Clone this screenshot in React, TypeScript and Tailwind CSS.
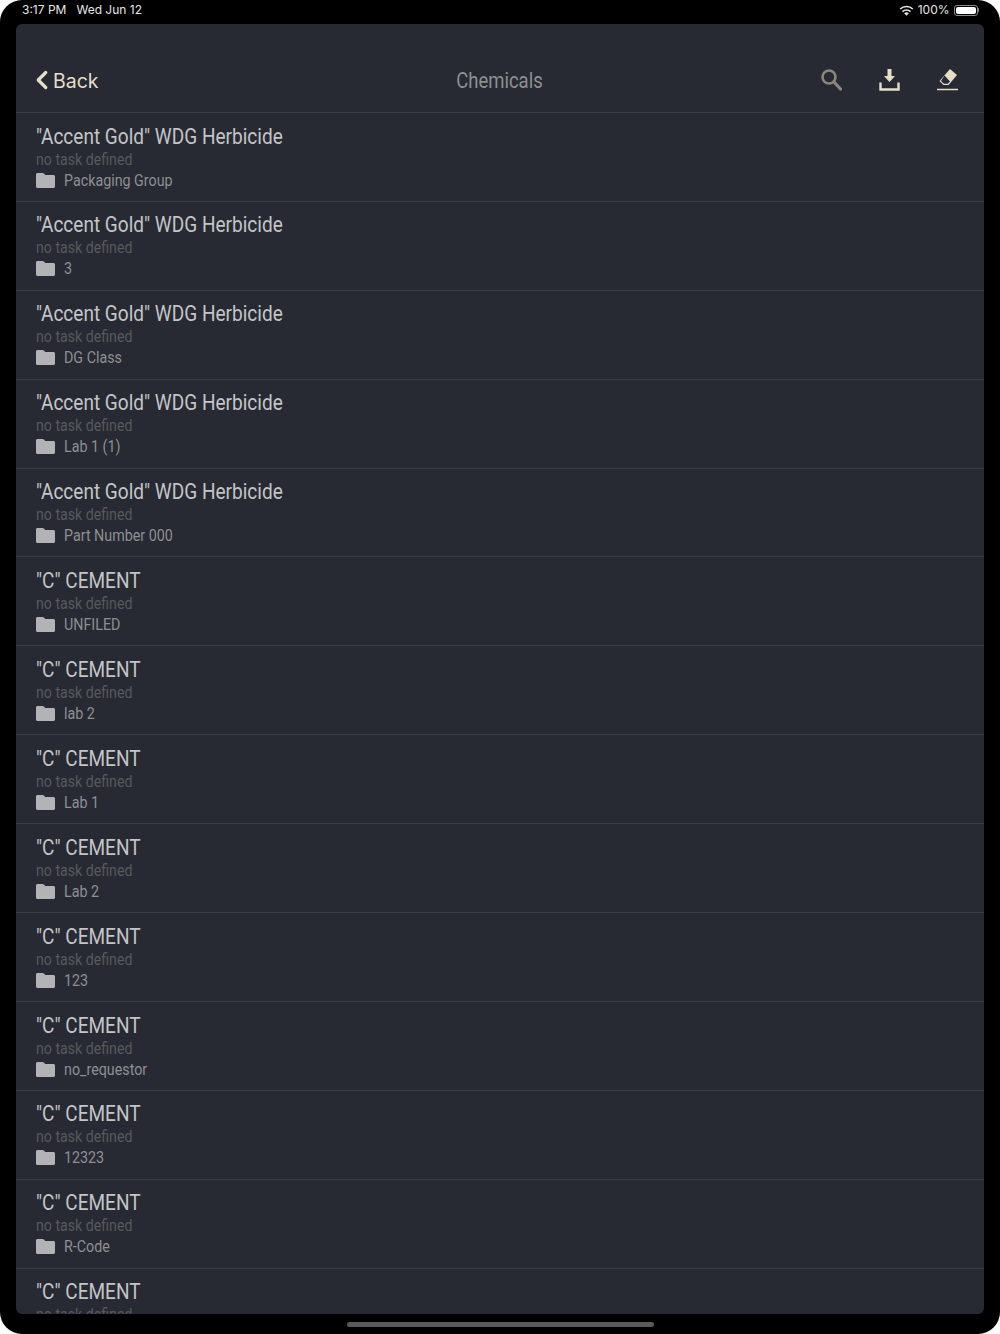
import { ChevronLeft } from 'lucide-react';

interface Chemical {
  name: string;
  folder: string;
}

const GOLD = '"Accent Gold" WDG Herbicide';
const CEMENT = '"C" CEMENT';

const chemicals: Chemical[] = [
  { name: GOLD, folder: 'Packaging Group' },
  { name: GOLD, folder: '3' },
  { name: GOLD, folder: 'DG Class' },
  { name: GOLD, folder: 'Lab 1 (1)' },
  { name: GOLD, folder: 'Part Number 000' },
  { name: CEMENT, folder: 'UNFILED' },
  { name: CEMENT, folder: 'lab 2' },
  { name: CEMENT, folder: 'Lab 1' },
  { name: CEMENT, folder: 'Lab 2' },
  { name: CEMENT, folder: '123' },
  { name: CEMENT, folder: 'no_requestor' },
  { name: CEMENT, folder: '12323' },
  { name: CEMENT, folder: 'R-Code' },
  { name: CEMENT, folder: '' },
];

function FolderIcon() {
  return (
    <svg width="19" height="16" viewBox="0 0 19 16" className="shrink-0">
      <path
        d="M1.500 1h5.200c.5 0 .9.2 1.200.5L9.300 3h8.200c.8 0 1.500.7 1.500 1.500v10c0 .8-.7 1.500-1.500 1.500h-16C.7 16 0 15.300 0 14.500v-12C0 1.700.7 1 1.500 1z"
        fill="#b3b3b5"
      />
    </svg>
  );
}

function Row({ item }: { item: Chemical }) {
  return (
    <div className="h-[88.9px] shrink-0 border-b border-[#3b3d42] pl-5 pt-[9.6px] font-['Roboto',sans-serif]">
      <div className="h-[27px] origin-left scale-x-[0.865] whitespace-nowrap text-[22px] leading-[27px] text-[#c4c5c7]">{item.name}</div>
      <div className="h-[19px] origin-left scale-x-[0.885] whitespace-nowrap text-[16px] leading-[19px] text-[#57595d]">no task defined</div>
      <div className="flex h-[22px] items-center gap-[9px]">
        <FolderIcon />
        <span className="origin-left scale-x-[0.84] whitespace-nowrap text-[17px] leading-[22px] text-[#8e8f92]">{item.folder}</span>
      </div>
    </div>
  );
}

export default function App() {
  return (
    <div className="h-[1334px] w-[1000px] bg-white">
      <div className="flex h-full flex-col overflow-hidden rounded-[22px] bg-black">
        {/* Status bar */}
        <div className="flex h-6 shrink-0 items-center justify-between pb-[4px] pl-[22px] pr-[21px] font-['Inter',sans-serif] text-[12px] text-[#e6e6e6]">
          <div className="flex gap-[10px]">
            <span>3:17 PM</span>
            <span>Wed Jun 12</span>
          </div>
          <div className="flex items-center gap-[4px]">
            <svg width="15" height="11" viewBox="0 0 14 10">
              <path d="M7 10 4.800 7.600a3.200 3.200 0 0 1 4.400 0z" fill="#e6e6e6" />
              <path d="M3.300 6a5.400 5.400 0 0 1 7.400 0M1.100 3.600a8.500 8.500 0 0 1 11.800 0" fill="none" stroke="#e6e6e6" strokeWidth="1.500" />
            </svg>
            <span>100%</span>
            <div className="flex items-center">
              <div className="h-[11px] w-[24px] rounded-[3px] border border-[#8a8a8a] p-[1px]">
                <div className="h-full w-full rounded-[2px] bg-white" />
              </div>
              <div className="h-[4px] w-[1.500px] rounded-r-sm bg-[#8a8a8a]" />
            </div>
          </div>
        </div>

        {/* Main panel */}
        <div className="mx-4 flex h-[1290px] shrink-0 flex-col overflow-hidden rounded-[6px] bg-[#272a32]">
          <div className="relative flex h-[89px] shrink-0 items-end border-b border-[#3b3d42] pb-[17px]">
            <div className="ml-[11px] flex h-[28px] items-center font-['Inter',sans-serif] text-[19.500px] leading-[28px] text-[#e6dfc8]">
              <ChevronLeft size={30} strokeWidth={2.600} className="-mt-[2px]" />
              <span className="-ml-[4px]">Back</span>
            </div>
            <div className="absolute bottom-[17px] left-0 right-0 text-center font-['Roboto',sans-serif] text-[22px] leading-[28px] text-[#8e8f92]">
              <span className="inline-block -translate-x-[1px] scale-x-[0.84]">Chemicals</span>
            </div>
            <div className="mb-[4px] ml-auto mr-[26px] flex items-center gap-[37px]">
              <svg width="21" height="22" viewBox="0 0 21 22">
                <circle cx="8" cy="8" r="6.500" fill="none" stroke="#8b8778" strokeWidth="2.600" />
                <path d="m13 13 6.500 7" stroke="#8b8778" strokeWidth="3.200" strokeLinecap="round" />
              </svg>
              <svg width="21" height="22" viewBox="0 0 21 22">
                <path d="M8.500 0h4v7h3.500l-5.500 6-5.500-6h3.500z" fill="#e6dfc8" />
                <path d="M1.500 13.500v7h18v-7" fill="none" stroke="#e6dfc8" strokeWidth="2.400" />
              </svg>
              <svg width="21" height="22" viewBox="0 0 21 22">
                <path d="M13 0 20 6 11.500 16H6.500L2.500 12z" fill="#e6dfc8" />
                <path d="M7.500 6.500 4 12l3 2.800h3.700L13 12.500z" fill="#272a32" />
                <path d="M0 20.500h21" stroke="#e6dfc8" strokeWidth="1.600" />
              </svg>
            </div>
          </div>
          <div className="flex min-h-0 flex-1 flex-col overflow-hidden">
            {chemicals.map((item, i) => (
              <Row key={i} item={item} />
            ))}
          </div>
        </div>

        {/* Home indicator */}
        <div className="flex flex-1 items-center justify-center">
          <div className="h-[5px] w-[307px] rounded-full bg-[#5a5a5a]" />
        </div>
      </div>
    </div>
  );
}
